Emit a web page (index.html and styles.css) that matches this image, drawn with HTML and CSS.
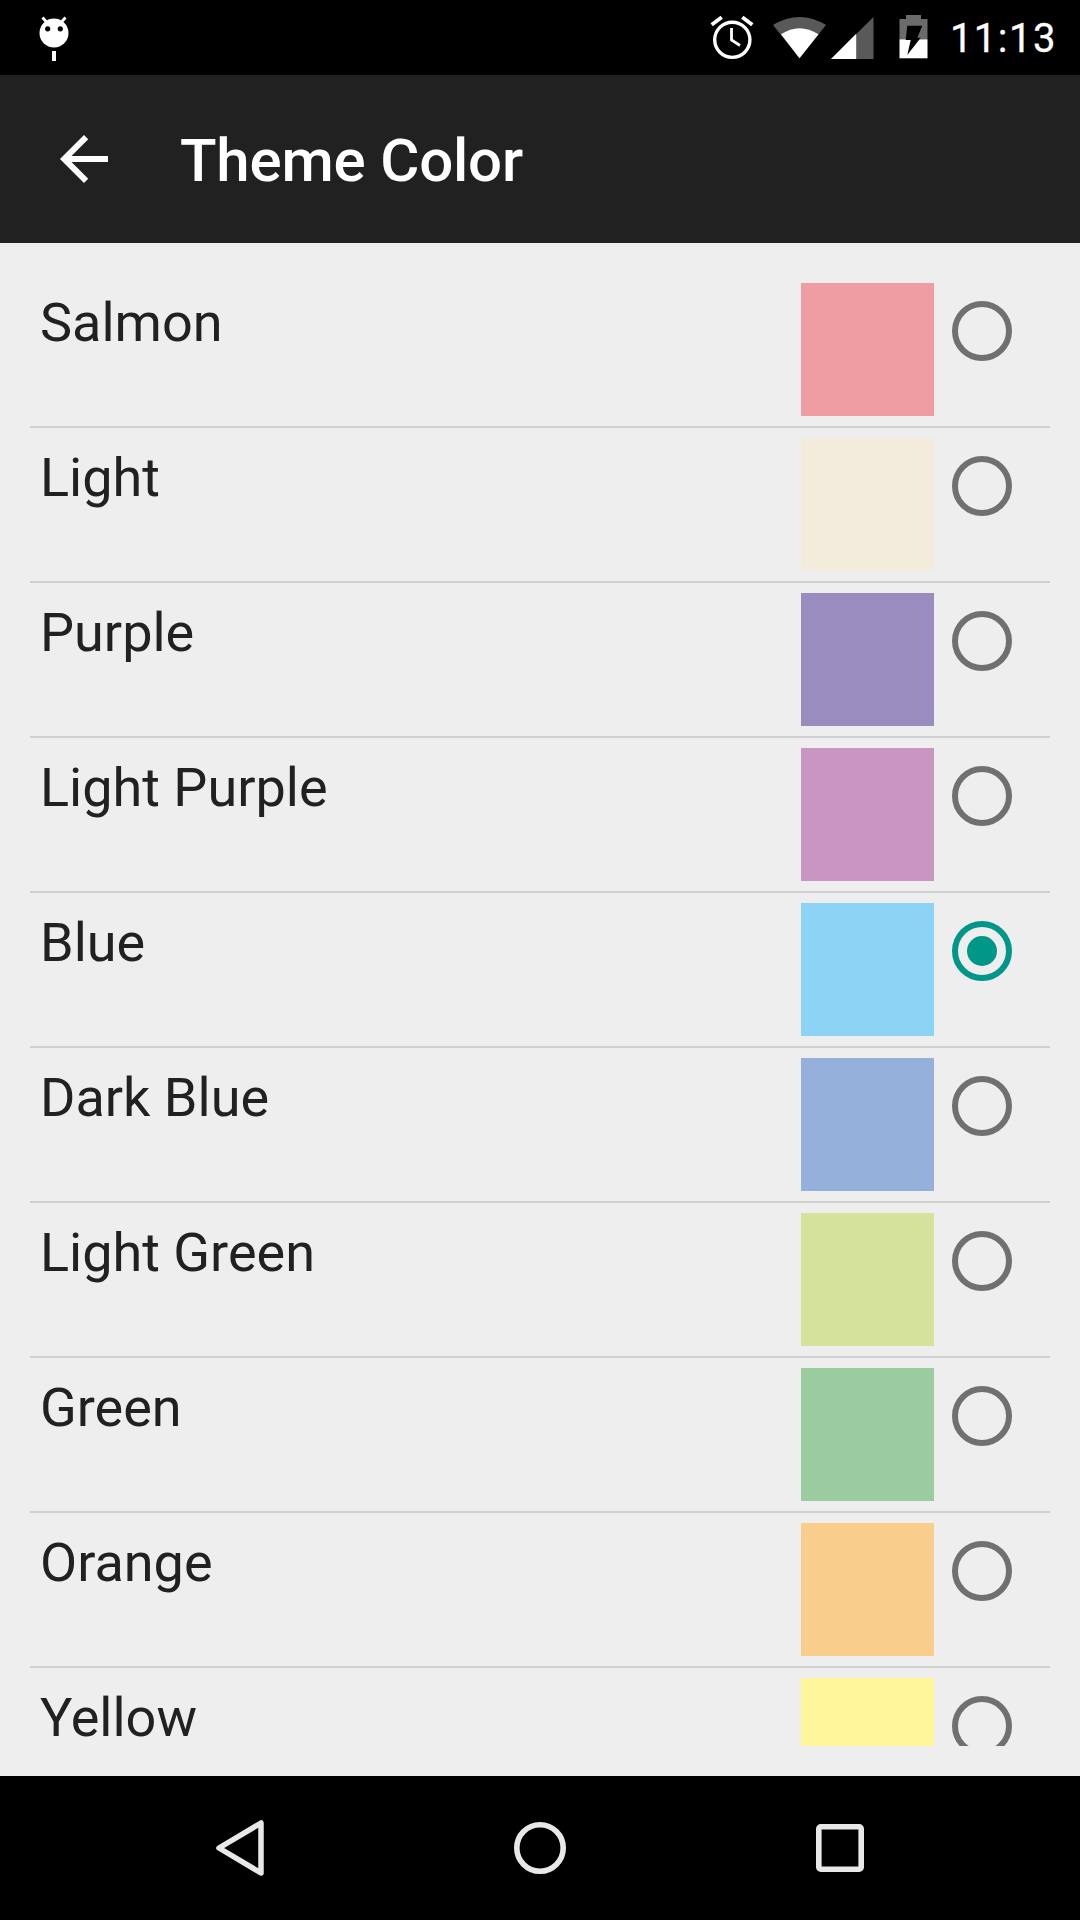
FILE: index.html
```html
<!DOCTYPE html>
<html lang="en">
<head>
<meta charset="utf-8">
<title>Theme Color</title>
<link rel="stylesheet" href="styles.css">
</head>
<body>
<div class="screen">
  <header class="status">
    <svg class="robot" viewBox="0 0 40 50"><circle cx="20" cy="20" r="14.5" fill="#fff"/><path d="M8.500 4.500 12.500 9M31.500 4.500 27.500 9" stroke="#fff" stroke-width="2.800" fill="none"/><circle cx="13.700" cy="15.800" r="2.600" fill="#000"/><circle cx="26.300" cy="15.800" r="2.600" fill="#000"/><rect x="18" y="38" width="4" height="10" fill="#fff"/></svg>
    <div class="status-right">
      <svg class="alarm" viewBox="0 0 44 46"><circle cx="22.300" cy="24.800" r="17.600" fill="none" stroke="#fff" stroke-width="3.400"/><path d="M21.500 13V25L30 30.500" fill="none" stroke="#fff" stroke-width="2.800"/><path d="M1.700 9.800 11.700 2.300M32.300 2.300 42.300 9.800" fill="none" stroke="#fff" stroke-width="3.800"/></svg>
      <svg class="wifi" viewBox="0 0 54 44"><path d="M26.500 43.300 0 10Q26.500 -6 53 10Z" fill="#595959"/><path d="M26.500 43.300 8 19.300Q26.500 7.300 45.500 19.300Z" fill="#fff"/></svg>
      <svg class="signal" viewBox="0 0 42.500 42"><path d="M0 42 42.500 0V42Z" fill="#595959"/><path d="M0 42 25.200 16.800V42Z" fill="#fff"/></svg>
      <svg class="battery" viewBox="0 0 29 44"><path d="M7 0H22V4H28.500V24.300H0.500V4H7Z" fill="#6b6b6b"/><rect x="0.500" y="24.300" width="28" height="19" fill="#fff"/><path d="M8.300 10.700H23.300L18.300 22.700H21.700L8.300 40 11.700 25H6.700Z" fill="#000"/></svg>
      <span class="time">11:13</span>
    </div>
  </header>

  <div class="appbar">
    <svg class="back" viewBox="0 0 24 24"><path d="M20 11H7.830l5.590-5.590L12 4l-8 8 8 8 1.410-1.410L7.830 13H20v-2z" fill="#fff"/></svg>
    <h1 class="title">Theme Color</h1>
  </div>

  <main class="content">
    <ul class="list">
      <li class="row"><span class="label">Salmon</span><span class="swatch salmon"></span><span class="radio"></span></li>
      <li class="row"><span class="label">Light</span><span class="swatch light"></span><span class="radio"></span></li>
      <li class="row"><span class="label">Purple</span><span class="swatch purple"></span><span class="radio"></span></li>
      <li class="row"><span class="label">Light Purple</span><span class="swatch light-purple"></span><span class="radio"></span></li>
      <li class="row"><span class="label">Blue</span><span class="swatch blue"></span><span class="radio checked"></span></li>
      <li class="row"><span class="label">Dark Blue</span><span class="swatch dark-blue"></span><span class="radio"></span></li>
      <li class="row"><span class="label">Light Green</span><span class="swatch light-green"></span><span class="radio"></span></li>
      <li class="row"><span class="label">Green</span><span class="swatch green"></span><span class="radio"></span></li>
      <li class="row"><span class="label">Orange</span><span class="swatch orange"></span><span class="radio"></span></li>
      <li class="row"><span class="label">Yellow</span><span class="swatch yellow"></span><span class="radio"></span></li>
    </ul>
  </main>

  <nav class="navbar">
    <svg class="nav-back" viewBox="0 0 48 56"><path d="M45 3V53L3 28Z" fill="none" stroke="#e8e8e8" stroke-width="5.500" stroke-linejoin="round"/></svg>
    <svg class="nav-home" viewBox="0 0 52 52"><circle cx="26" cy="26" r="23.200" fill="none" stroke="#e8e8e8" stroke-width="5.600"/></svg>
    <svg class="nav-recent" viewBox="0 0 48 48"><rect x="2.800" y="2.800" width="42.400" height="42.400" rx="2" fill="none" stroke="#e8e8e8" stroke-width="5.600"/></svg>
  </nav>
</div>
</body>
</html>
```

FILE: styles.css
```css
* { box-sizing: border-box; }
html, body { margin: 0; padding: 0; }
body { font-family: Roboto, "Liberation Sans", sans-serif; background: #000; }

.screen { width: 1080px; height: 1920px; display: flex; flex-direction: column; overflow: hidden; }

/* status bar */
.status { height: 75px; flex: none; background: #000; display: flex; justify-content: space-between; align-items: flex-start; padding: 0 23px 0 34px; }
.robot { width: 40px; height: 50px; margin-top: 13px; }
.status-right { display: flex; align-items: flex-start; }
.alarm { width: 44px; height: 46px; margin-top: 15px; margin-right: 19px; }
.wifi { width: 54px; height: 44px; margin-top: 15px; margin-right: 4.500px; }
.signal { width: 42.500px; height: 42px; margin-top: 16.500px; margin-right: 25px; }
.battery { width: 29px; height: 44px; margin-top: 15px; margin-right: 22px; }
.time { color: #fff; font-size: 40px; line-height: 46px; margin-top: 16px; letter-spacing: 1.500px; -webkit-text-stroke: 0.3px #fff; }

/* app bar */
.appbar { height: 168px; flex: none; background: #212121; display: flex; align-items: center; padding-left: 48px; }
.back { width: 72px; height: 72px; flex: none; margin-right: 60px; }
.title { margin: 4px 0 0; color: #fff; font-size: 60px; font-weight: 500; line-height: 70px; letter-spacing: -0.200px; }

/* list */
.content { flex: 1; min-height: 0; background: #eee; padding: 30px; display: flex; }
.list { list-style: none; margin: 0; padding: 0; flex: 1; overflow: hidden; }
.row { display: flex; align-items: flex-start; height: 155px; padding: 10px 38px 0 0; border-bottom: 2px solid #d0d0d0; }
.row:last-child { border-bottom: 0; }
.label { flex: 1; padding: 11px 0 0 10px; font-size: 54px; line-height: 57px; color: #212121; }
.swatch { width: 133px; height: 133px; flex: none; }
.radio { width: 60px; height: 60px; flex: none; margin: 18px 0 0 18px; border: 6px solid #707070; border-radius: 50%; display: flex; align-items: center; justify-content: center; }
.radio.checked { border-color: #009688; }
.radio.checked::after { content: ""; width: 30px; height: 30px; border-radius: 50%; background: #009688; }

.salmon { background: #ef9ca3; }
.light { background: #f3ecdd; }
.purple { background: #9b8cbf; }
.light-purple { background: #c896c0; }
.blue { background: #8cd3f5; }
.dark-blue { background: #95b0da; }
.light-green { background: #d5e29b; }
.green { background: #9acc9f; }
.orange { background: #f9cd8c; }
.yellow { background: #fff59a; }

/* nav bar */
.navbar { height: 144px; flex: none; background: #000; display: flex; align-items: center; padding-left: 216px; }
.nav-back { width: 48px; height: 56px; margin-right: 250px; }
.nav-home { width: 52px; height: 52px; margin-right: 250px; }
.nav-recent { width: 48px; height: 48px; }
```
